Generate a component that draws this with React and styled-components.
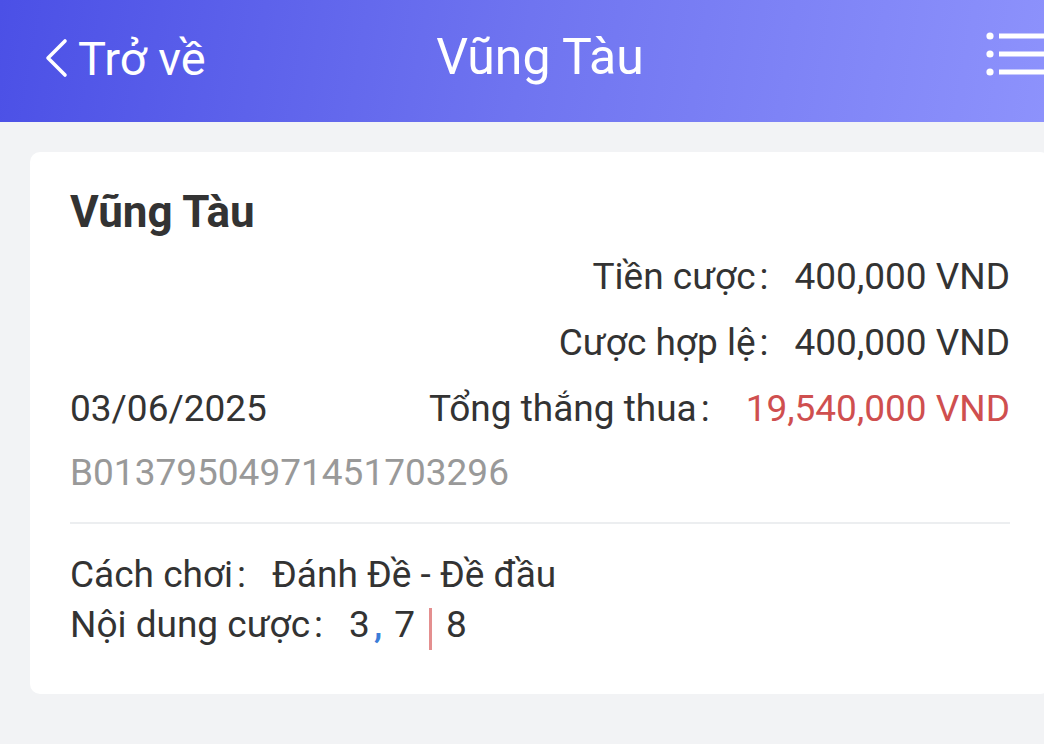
import React from "react";
import styled, { createGlobalStyle } from "styled-components";

const GlobalStyle = createGlobalStyle`
  html, body {
    margin: 0;
    padding: 0;
    background: #f2f3f5;
    font-family: Roboto, "Noto Sans", sans-serif;
    color: #333;
    overflow-x: hidden;
  }
`;

const Page = styled.div`
  width: 1044px;
  min-height: 744px;
  background: #f2f3f5;
`;

const Header = styled.header`
  height: 122px;
  display: flex;
  align-items: center;
  justify-content: space-between;
  padding: 0 0 0 44px;
  background: linear-gradient(100deg, #4b50e6 0%, #6f74f0 50%, #8d92fc 100%);
  color: #fff;
  position: relative;
  box-sizing: border-box;
`;

const BackButton = styled.div`
  display: flex;
  align-items: center;
  gap: 10px;
  font-size: 47px;
  margin-top: -6px;
`;

const Title = styled.div`
  position: absolute;
  inset: 0;
  display: flex;
  align-items: center;
  justify-content: center;
  font-size: 50px;
  padding-left: 36px;
  margin-top: -8px;
  pointer-events: none;
`;

const MenuIcon = styled.svg`
  width: 60px;
  height: 50px;
  margin-top: -12px;
  display: block;
`;

const Card = styled.section`
  margin: 30px 0 0 30px;
  width: 1020px;
  box-sizing: border-box;
  background: #fff;
  border-radius: 10px;
  padding: 34px 40px 44px;
`;

const CardTitle = styled.h2`
  margin: 0 0 6px;
  font-size: 44px;
  font-weight: 700;
  line-height: 52px;
  color: #333;
`;

const Row = styled.div`
  display: flex;
  justify-content: ${(p) => (p.$split ? "space-between" : "flex-end")};
  align-items: center;
  font-size: 37px;
  line-height: 66px;
`;

const Stat = styled.div`
  display: flex;
  align-items: center;
`;

const Colon = styled.span`
  margin: 0 ${(p) => p.$gap || 26}px 0 4px;
`;

const Value = styled.span`
  color: ${(p) => (p.$red ? "#cf4f4f" : "#333")};
`;

const OrderId = styled.div`
  font-size: 37px;
  line-height: 62px;
  color: #999;
`;

const Divider = styled.hr`
  border: none;
  border-top: 2px solid #eceef0;
  margin: 18px 0 26px;
`;

const InfoLine = styled.div`
  font-size: 37px;
  line-height: 50px;
  display: flex;
  align-items: center;
`;

const Comma = styled.span`
  color: #3b7dd8;
  font-weight: 500;
  margin: 0 12px 0 4px;
`;

const Pipe = styled.span`
  display: inline-block;
  width: 3px;
  height: 42px;
  background: #e48f8f;
  margin: 8px 14px 0 14px;
`;

export default function App() {
  return (
    <Page>
      <GlobalStyle />
      <Header>
        <BackButton>
          <svg width="24" height="40" viewBox="0 0 24 40">
            <path d="M21 3 L4 20 L21 37" fill="none" stroke="#fff" strokeWidth="3.6" strokeLinecap="round" strokeLinejoin="round" />
          </svg>
          <span>Trở về</span>
        </BackButton>
        <Title>Vũng Tàu</Title>
        <MenuIcon viewBox="0 0 60 50">
          <circle cx="6" cy="6" r="3.6" fill="#fff" />
          <circle cx="6" cy="24" r="3.6" fill="#fff" />
          <circle cx="6" cy="42" r="3.6" fill="#fff" />
          <rect x="15" y="3.5" width="45" height="5" fill="#fff" />
          <rect x="15" y="21.5" width="45" height="5" fill="#fff" />
          <rect x="15" y="39.5" width="45" height="5" fill="#fff" />
        </MenuIcon>
      </Header>

      <Card>
        <CardTitle>Vũng Tàu</CardTitle>
        <Row>
          <Stat>
            <span>Tiền cược</span>
            <Colon>:</Colon>
            <Value>400,000 VND</Value>
          </Stat>
        </Row>
        <Row>
          <Stat>
            <span>Cược hợp lệ</span>
            <Colon>:</Colon>
            <Value>400,000 VND</Value>
          </Stat>
        </Row>
        <Row $split>
          <span>03/06/2025</span>
          <Stat>
            <span>Tổng thắng thua</span>
            <Colon $gap={36}>:</Colon>
            <Value $red>19,540,000 VND</Value>
          </Stat>
        </Row>
        <OrderId>B01379504971451703296</OrderId>
        <Divider />
        <InfoLine>
          <span>Cách chơi</span>
          <Colon>:</Colon>
          <span>Đánh Đề - Đề đầu</span>
        </InfoLine>
        <InfoLine>
          <span>Nội dung cược</span>
          <Colon>:</Colon>
          <span>3</span>
          <Comma>,</Comma>
          <span>7</span>
          <Pipe />
          <span>8</span>
        </InfoLine>
      </Card>
    </Page>
  );
}
